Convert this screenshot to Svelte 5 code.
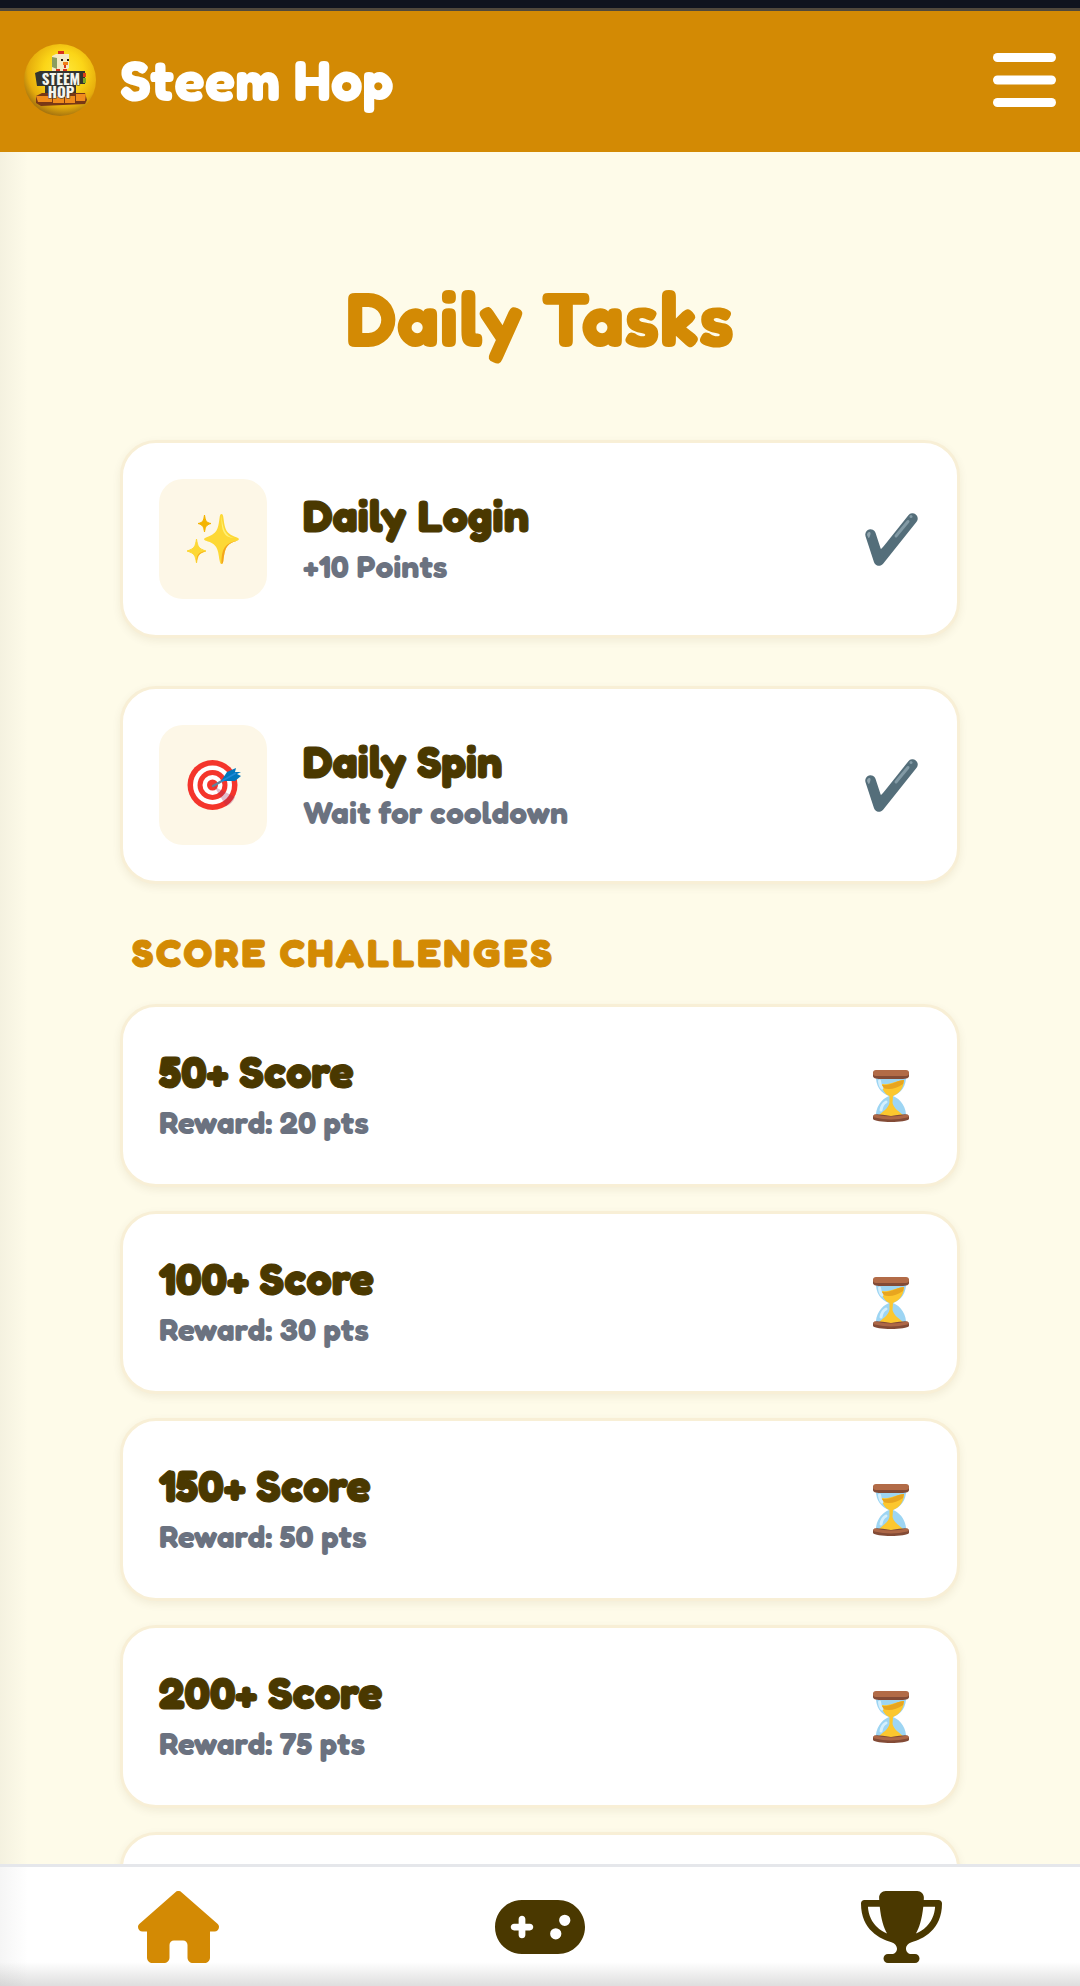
<script>
  const dailyTasks = [
    { icon: 'sparkles', title: 'Daily Login', detail: '+10 Points' },
    { icon: 'target', title: 'Daily Spin', detail: 'Wait for cooldown' }
  ];

  const challenges = [
    { score: 50, reward: 20 },
    { score: 100, reward: 30 },
    { score: 150, reward: 50 },
    { score: 200, reward: 75 }
  ];
</script>

{#snippet sparkles()}
  <svg class="emoji" viewBox="0 0 60 60" aria-hidden="true">
    <g fill="#fdd835">
      <path d="M38.500 5C39.500 5 40 6 40.300 8 42 21 43 24.500 54 28.500 56.500 29.500 56.500 31 54 31.700 43 35 42 39 40.300 52 40 54 39.500 55 38.500 55S37 54 36.700 52C35 39 34 35 23 31.700 20.500 31 20.500 29.500 23 28.500 34 24.500 35 21 36.700 8 37 6 37.500 5 38.500 5z" />
      <path d="M13.500 30C14.800 38 15.500 39.500 23 42 15.500 44.500 14.800 46 13.500 54 12.200 46 11.500 44.500 4 42 11.500 39.500 12.200 38 13.500 30z" stroke="#fdd835" stroke-linejoin="round" />
    </g>
    <path d="M54 31.700C43 35 42 39 40.300 52 40 54 39.500 55 38.500 55 38.500 43 40 34 54 31.700zM23 42C15.500 44.500 14.800 46 13.500 54 13.500 46 15 43 23 42z" fill="#f4a51c" />
    <path d="M38.500 6C39.500 19 42 27 51 29 41 28.500 38 22 38.500 6z" fill="#fff176" />
    <path d="M21.500 6C22.500 12 23 13.500 28 14.500 23 16 22.500 17.500 21.500 23 20.500 17.500 20 16 15 14.500 20 13.500 20.500 12 21.500 6z" fill="#f4b400" stroke="#f4b400" stroke-linejoin="round" />
  </svg>
{/snippet}

{#snippet target()}
  <svg class="emoji" viewBox="0 0 60 60" aria-hidden="true">
    <circle cx="29.500" cy="30" r="25" fill="#f4352c" />
    <circle cx="29.500" cy="30" r="19.500" fill="#fff" />
    <circle cx="29.500" cy="30" r="15" fill="#f4352c" />
    <circle cx="29.500" cy="30" r="10" fill="#fff" />
    <circle cx="29.500" cy="30" r="5.500" fill="#f4352c" />
    <path d="M31 31L36 34 52 42C50 47 47 50 43 51z" fill="#9b285c" opacity=".3" />
    <path d="M30 31L46 22" stroke="#5f829d" stroke-width="2.500" stroke-linecap="round" />
    <path d="M38 26L44 17 53 13 52 17 58 17 54 19 58 21 52 26z" fill="#0277bd" />
    <path d="M39 26L53 18" stroke="#1e88d8" stroke-width="1.500" />
  </svg>
{/snippet}

{#snippet check()}
  <svg class="emoji" viewBox="0 0 60 60" role="img" aria-label="Completed">
    <path d="M9.500 25.500L18 51.500 51.500 9.500" fill="none" stroke="#546e7a" stroke-width="10.500" stroke-linecap="round" stroke-linejoin="round" />
    <path d="M16 39L20 40 27 34 22 50z" fill="#546e7a" />
    <path d="M35 27L47 12.500" stroke="#829aa5" stroke-width="3" stroke-linecap="round" />
    <circle cx="50" cy="7.500" r="1.500" fill="#829aa5" />
    <path d="M6 26C6 22.500 10 22 9.500 25 9 27 8.500 29 7.500 29z" fill="#90a4ae" />
  </svg>
{/snippet}

{#snippet hourglass()}
  <svg class="emoji" viewBox="0 0 60 60" role="img" aria-label="In progress">
    <path d="M15 8H45C46 20 40 27 32 30 40 33 46 42 45 52H15C14 42 20 33 28 30 20 27 14 20 15 8z" fill="#9dd5f3" />
    <path d="M21 18C30 19 37 14 43 14 43 23 37 28 32 30L31.500 37C33 43 38 45 43 50Q30 54 17 50C22 45 27 43 28.500 37L28.500 30C24 28 21 24 21 18z" fill="#fcc72e" />
    <path d="M21 19C30 20 37 14 43 14L42 18C35 23 28 24 22 22z" fill="#e8a51f" />
    <path d="M20 44Q21 38 25 36M18.500 15Q19 20 21 22" fill="none" stroke="#d4effc" stroke-width="3" stroke-linecap="round" />
    <path d="M12 7C12 4 20 4 30 4S48 4 48 7V10C48 14 38 13 30 13S12 14 12 10z" fill="#834b36" />
    <rect x="12" y="4" width="36" height="6" rx="3" fill="#b26b47" />
    <path d="M12 51C12 47 17 48 30 50 43 48 48 47 48 51V53C46 57 14 57 12 53z" fill="#834b36" />
    <path d="M14 50Q30 54 46 50" fill="none" stroke="#ad6746" stroke-width="3" stroke-linecap="round" />
  </svg>
{/snippet}

<div class="app">
  <header class="topbar">
    <a class="brand" href="#home">
      <svg class="logo" viewBox="0 0 72 72" aria-hidden="true">
        <defs>
          <radialGradient id="ball" cx=".55" cy=".38" r=".62">
            <stop offset="0" stop-color="#ffe93c" />
            <stop offset=".45" stop-color="#fbd517" />
            <stop offset=".8" stop-color="#e6ac0c" />
            <stop offset="1" stop-color="#a8760f" />
          </radialGradient>
        </defs>
        <circle cx="36" cy="36" r="36" fill="url(#ball)" />
        <path d="M34 7h6v4h-6z" fill="#d8301d" />
        <path d="M28 12l4-2h13v14l-4 3H28z" fill="#f4eac3" />
        <path d="M28 13l5 1v11l-5-2z" fill="#8a9d61" />
        <path d="M37 15h2v2h-2zM43 15h2v2h-2z" fill="#24190d" />
        <path d="M39 18h5v3h-5z" fill="#f07e16" />
        <path d="M40 21h2v3h-2zM32 25h4v3h-4zM39 25h4v3h-4z" fill="#d7351c" />
        <path d="M11 29l5-2h45v13h-9v14H21V42h-8z" fill="#34352f" />
        <path d="M59 29h3v4h-3z" fill="#db3f19" />
        <path d="M59 34h3v5h-3z" fill="#80a723" />
        <path d="M12 52l6-3h43l2 7-2 4-44 2-5-3z" fill="#793815" />
        <path d="M12 52h16v6H14zM29 52h11v7H29zM41 52h10v7H41zM52 50h10l-1 7h-9z" fill="#f08b1c" />
        <g class="logo-text">
          <text x="37" y="41">STEEM</text>
          <text x="37" y="54">HOP</text>
        </g>
      </svg>
      <span>Steem Hop</span>
    </a>
    <button class="menu" aria-label="Menu">
      <svg viewBox="0 0 448 512" fill="currentColor" aria-hidden="true">
        <rect y="64" width="448" height="64" rx="32" />
        <rect y="224" width="448" height="64" rx="32" />
        <rect y="384" width="448" height="64" rx="32" />
      </svg>
    </button>
  </header>

  <main>
    <h1>Daily Tasks</h1>

    <div class="daily">
      {#each dailyTasks as task}
        <article class="card">
          <div class="tile">
            {#if task.icon === 'sparkles'}
              {@render sparkles()}
            {:else}
              {@render target()}
            {/if}
          </div>
          <div class="info">
            <h3>{task.title}</h3>
            <p>{task.detail}</p>
          </div>
          {@render check()}
        </article>
      {/each}
    </div>

    <h2>SCORE CHALLENGES</h2>

    <div class="scores">
      {#each challenges as challenge}
        <article class="card">
          <div class="info">
            <h3>{challenge.score}+ Score</h3>
            <p>Reward: {challenge.reward} pts</p>
          </div>
          {@render hourglass()}
        </article>
      {/each}
      <div class="card placeholder"></div>
    </div>
  </main>

  <nav>
    <a class="active" href="#home" aria-label="Home">
      <svg viewBox="0 0 576 512" fill="currentColor">
        <path d="M266 8c12-11 31-11 43 0l256 224c7 6 11 14 11 24 0 18-14 32-32 32h-32v184c0 22-18 40-40 40h-80c-22 0-40-18-40-40v-88c0-18-14-32-32-32h-64c-18 0-32 14-32 32v88c0 22-18 40-40 40h-80c-22 0-40-18-40-40V288H32c-18 0-32-14-32-32 0-10 4-18 11-24z" />
      </svg>
    </a>
    <a href="#play" aria-label="Play">
      <svg viewBox="0 0 640 512" fill="currentColor">
        <path d="M192 64C86 64 0 150 0 256s86 192 192 192h256c106 0 192-86 192-192S554 64 448 64H192zM496 168a40 40 0 1 1 0 80 40 40 0 1 1 0-80zM392 304a40 40 0 1 1 80 0 40 40 0 1 1-80 0zM168 200c0-13.300 10.700-24 24-24s24 10.700 24 24v32h32c13.300 0 24 10.700 24 24s-10.700 24-24 24h-32v32c0 13.300-10.700 24-24 24s-24-10.700-24-24v-32h-32c-13.300 0-24-10.700-24-24s10.700-24 24-24h32v-32z" />
      </svg>
    </a>
    <a href="#leaderboard" aria-label="Leaderboard">
      <svg viewBox="0 0 576 512" fill="currentColor">
        <path d="M400 0H176c-26.500 0-48.100 21.800-47.100 48.200.2 5.300.4 10.600.7 15.800H24C10.700 64 0 74.700 0 88c0 92.600 33.500 157 78.500 200.700 44.300 43.100 98.300 64.800 138.100 75.800 23.400 6.500 39.400 26 39.400 45.600 0 20.900-17 37.900-37.900 37.900H192c-17.700 0-32 14.300-32 32s14.300 32 32 32h192c17.700 0 32-14.300 32-32s-14.300-32-32-32h-26.100C337 448 320 431 320 410.100c0-19.600 15.900-39.200 39.400-45.600 39.900-11 93.900-32.700 138.200-75.800C542.500 245 576 180.600 576 88c0-13.300-10.700-24-24-24H446.400c.3-5.200.5-10.400.7-15.800C448.100 21.800 426.500 0 400 0zM48.900 112h84.400c9.100 90.100 29.200 150.300 51.900 190.600-24.900-11-50.800-26.500-73.200-48.300-32-31.100-58-76-63-142.300zM464.100 254.300c-22.400 21.800-48.300 37.300-73.200 48.300 22.700-40.300 42.800-100.500 51.900-190.600h84.400c-5.100 66.300-31.100 111.200-63 142.300z" />
      </svg>
    </a>
  </nav>
</div>

<style>
  :global(body) {
    margin: 0;
  }
  .app {
    box-sizing: border-box;
    display: flex;
    flex-direction: column;
    height: 100vh;
    border-top: 8px solid #0f141e;
    background: #fefbe9;
    color: #4a3800;
    font-family: Fredoka, Lato, sans-serif;
    font-weight: 700;
  }
  .topbar {
    box-sizing: border-box;
    display: flex;
    align-items: center;
    justify-content: space-between;
    flex: none;
    height: 144px;
    padding: 0 24px;
    background: #d38a04;
    box-shadow: inset 0 3px #50493c;
    color: #fff;
  }
  .brand {
    display: flex;
    align-items: center;
    gap: 24px;
    color: inherit;
    font-size: 57px;
    line-height: 68px;
    text-decoration: none;
  }
  .brand span {
    padding-bottom: 2px;
  }
  .logo {
    width: 72px;
    height: 72px;
  }
  .logo-text {
    fill: #f5f5ed;
    stroke: #34352f;
    stroke-width: 1px;
    paint-order: stroke;
    font: bold 15px "Liberation Sans Narrow", Oswald, "Liberation Sans", sans-serif;
    text-anchor: middle;
  }
  .menu {
    padding: 0;
    border: 0;
    background: none;
    color: inherit;
  }
  .menu svg,
  nav svg {
    display: block;
    height: 72px;
  }
  main {
    flex: 1;
    min-height: 0;
    overflow-y: auto;
    scrollbar-width: none;
    padding: 118px 120px 0;
    background: linear-gradient(to right, rgba(60, 60, 50, 0.05), transparent 28px);
  }
  h1,
  h2,
  h3,
  p {
    margin: 0;
  }
  h1 {
    margin-bottom: 74px;
    color: #d38a04;
    font-size: 77px;
    line-height: 96px;
    text-align: center;
  }
  h2 {
    margin: 45px 12px 27px;
    color: #d38a04;
    font-size: 39px;
    line-height: 48px;
    letter-spacing: 3px;
    -webkit-text-stroke: 1px currentColor;
  }
  .daily,
  .scores {
    display: flex;
    flex-direction: column;
    gap: 48px;
  }
  .scores {
    gap: 24px;
  }
  .card {
    display: flex;
    align-items: center;
    gap: 36px;
    padding: 36px;
    border: 3px solid #f8efd6;
    border-radius: 36px;
    background: #fff;
    box-shadow: 0 3px 8px rgba(90, 70, 10, 0.08);
  }
  .placeholder {
    min-height: 105px;
  }
  .tile {
    display: flex;
    align-items: center;
    justify-content: center;
    width: 108px;
    height: 120px;
    border-radius: 24px;
    background: #fdf7e7;
  }
  .info {
    flex: 1;
    padding-bottom: 3px;
  }
  h3 {
    font-size: 45px;
    line-height: 57px;
    -webkit-text-stroke: 1px currentColor;
  }
  p {
    color: #6b7280;
    font-size: 32px;
    line-height: 45px;
  }
  .emoji {
    flex: none;
    width: 60px;
    height: 60px;
  }
  nav {
    box-sizing: border-box;
    display: flex;
    justify-content: space-around;
    flex: none;
    height: 122px;
    padding-top: 24px;
    border-top: 3px solid #e5e7eb;
    background:
      linear-gradient(to right, rgba(60, 60, 60, 0.05), transparent 28px),
      linear-gradient(to top, #dedede, #fff 24px);
  }
  nav a {
    color: #4a3800;
  }
  nav .active {
    color: #d38a04;
  }
</style>
